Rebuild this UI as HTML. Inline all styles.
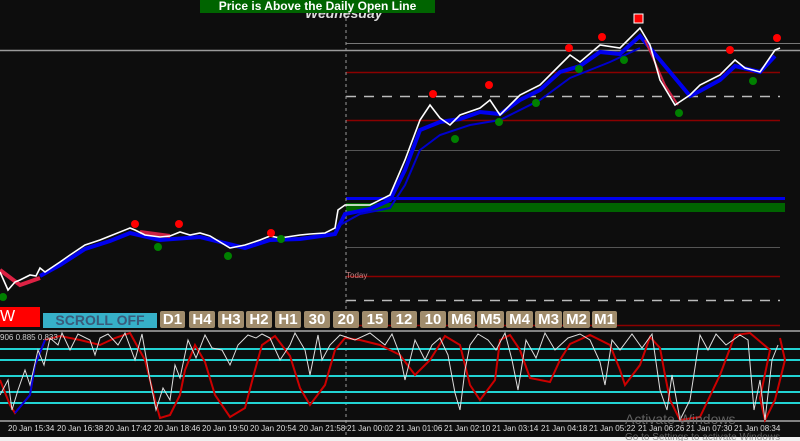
<!DOCTYPE html>
<html><head><meta charset="utf-8"><style>
html,body{margin:0;padding:0;background:#0d0d0d;width:800px;height:441px;overflow:hidden;font-family:"Liberation Sans",sans-serif}
.b{position:absolute;top:311px;height:17px;background:#a08c6c;color:#fff;font-weight:bold;font-size:15px;line-height:17px;text-align:center;border-radius:2px}
</style></head><body>
<svg width="800" height="441" style="position:absolute;left:0;top:0" xmlns="http://www.w3.org/2000/svg">
<rect width="800" height="441" fill="#0d0d0d"/>
<line x1="0" y1="50.5" x2="800" y2="50.5" stroke="#9a9a9a" stroke-width="1.5"/>
<line x1="346" y1="43.5" x2="800" y2="43.5" stroke="#777" stroke-width="1"/>
<line x1="346" y1="72.5" x2="780" y2="72.5" stroke="#8b0000" stroke-width="1.5"/>
<line x1="346" y1="96.5" x2="780" y2="96.5" stroke="#bbb" stroke-width="1.5" stroke-dasharray="10,8"/>
<line x1="346" y1="120.5" x2="780" y2="120.5" stroke="#8b0000" stroke-width="1.5"/>
<line x1="346" y1="150.5" x2="780" y2="150.5" stroke="#555" stroke-width="1"/>
<line x1="346" y1="198.5" x2="785" y2="198.5" stroke="#0000ee" stroke-width="3"/>
<rect x="346" y="203" width="439" height="9" fill="#006400"/>
<line x1="346" y1="247.5" x2="780" y2="247.5" stroke="#555" stroke-width="1"/>
<line x1="346" y1="276.5" x2="780" y2="276.5" stroke="#8b0000" stroke-width="1.5"/>
<line x1="346" y1="300.5" x2="780" y2="300.5" stroke="#bbb" stroke-width="1.5" stroke-dasharray="10,8"/>
<line x1="346" y1="325.5" x2="780" y2="325.5" stroke="#8b0000" stroke-width="1.5"/>
<line x1="346" y1="0" x2="346" y2="436" stroke="#999" stroke-width="1" stroke-dasharray="3,3"/>
<text x="346" y="278" fill="#c08080" font-size="8">Today</text>
<polyline fill="none" stroke="#0000ee" stroke-width="4" points="40,276 60,265 85,249 110,241 130,233 160,240 200,237 245,248 270,240 300,239 335,234 345,214 370,209 390,200 405,170 420,130 440,122 460,119 480,112 500,114 520,100 540,90 560,72 580,66 600,52 620,54 640,36 650,48 690,96 700,91 720,80 735,66 760,72 775,56"/>
<polyline fill="none" stroke="#0000cc" stroke-width="2" points="340,225 360,214 390,208 405,185 420,150 440,135 470,125 500,120 540,100 570,78 610,62 640,48 M690,100 720,88 760,76"/>
<polyline fill="none" stroke="#dd2244" stroke-width="4" points="0,270 20,285 40,278"/>
<polyline fill="none" stroke="#cc2244" stroke-width="4" points="140,232 170,236 M210,236 230,246 245,244 M640,35 660,70 680,95 700,92"/>
<polyline fill="none" stroke="#cc2244" stroke-width="2" points="645,40 665,85 678,105 M650,45 670,80 690,98"/>
<polyline fill="none" stroke="#fff" stroke-width="1.6" points="0,272 8,290 15,282 20,280 30,275 36,276 40,268 45,272 60,262 70,255 85,245 100,240 110,236 130,228 135,230 145,235 160,237 170,236 180,232 190,235 200,233 210,236 220,242 230,248 245,245 260,240 270,236 280,238 300,235 310,234 325,233 335,228 338,210 345,205 370,205 390,195 405,160 420,120 430,105 440,118 450,125 460,115 480,108 490,100 500,115 510,105 520,95 540,85 560,65 570,55 580,62 600,45 620,48 640,28 650,45 660,80 675,105 690,95 700,85 720,75 735,60 745,68 760,72 775,50 780,48"/>
<g fill="#ff0000"><circle cx="135" cy="224" r="4"/><circle cx="179" cy="224" r="4"/><circle cx="271" cy="233" r="4"/><circle cx="433" cy="94" r="4"/><circle cx="489" cy="85" r="4"/><circle cx="569" cy="48" r="4"/><circle cx="602" cy="37" r="4"/><circle cx="730" cy="50" r="4"/><circle cx="777" cy="38" r="4"/></g>
<rect x="634" y="14" width="9" height="9" fill="#f00" stroke="#fff"/>
<g fill="#008000"><circle cx="3" cy="297" r="4"/><circle cx="158" cy="247" r="4"/><circle cx="228" cy="256" r="4"/><circle cx="281" cy="239" r="4"/><circle cx="455" cy="139" r="4"/><circle cx="499" cy="122" r="4"/><circle cx="536" cy="103" r="4"/><circle cx="579" cy="69" r="4"/><circle cx="624" cy="60" r="4"/><circle cx="679" cy="113" r="4"/><circle cx="753" cy="81" r="4"/></g>
<line x1="0" y1="331" x2="800" y2="331" stroke="#aaa" stroke-width="1.5"/>
<line x1="0" y1="421" x2="800" y2="421" stroke="#aaa" stroke-width="1.5"/>
<g stroke="#22d3d3" stroke-width="2"><line x1="0" y1="349" x2="800" y2="349"/><line x1="0" y1="360" x2="800" y2="360"/><line x1="0" y1="376" x2="800" y2="376"/><line x1="0" y1="392" x2="800" y2="392"/><line x1="0" y1="403" x2="800" y2="403"/></g>
<polyline fill="none" stroke="#cc0000" stroke-width="2" points="0,380 10,405 15,413 30,395 35,365 45,340 60,336 80,340 100,345 115,338 130,333 145,360 155,400 160,418 170,415 180,395 185,370 195,345 205,362 215,395 230,417 245,408 255,370 262,345 275,336 290,356 300,388 310,405 325,385 335,350 345,338 360,340 380,345 400,355 415,375 430,360 445,336 460,345 470,385 480,400 495,380 500,340 510,335 520,350 530,378 550,382 560,360 570,344 590,335 610,345 620,370 625,385 640,365 650,337 660,348 665,375 670,400 680,420 700,417 720,375 735,335 750,333 770,350 760,398 765,420 775,400 785,360 780,338"/>
<polyline fill="none" stroke="#0000dd" stroke-width="2" points="15,413 30,395 35,365 45,340 M160,418 170,415 180,395 185,370 195,345 M230,417 245,408 255,370 262,345 M325,385 335,350 M480,400 495,380 500,340 M550,382 560,360 570,344 M640,365 650,337 M700,417 720,375 735,335 M765,420 775,400 785,360"/>
<polyline fill="none" stroke="#ddd" stroke-width="1" points="0,395 8,380 12,410 18,390 25,370 30,385 38,350 44,365 50,338 58,345 62,333 70,350 78,334 90,340 95,355 100,338 108,334 118,345 125,333 135,360 142,334 150,380 156,410 163,388 170,400 175,365 180,378 188,340 196,358 205,335 212,348 222,350 230,365 238,345 248,335 256,338 262,334 270,338 280,360 290,345 295,333 305,350 310,375 318,335 322,360 330,345 340,335 355,340 370,333 385,345 392,334 400,355 405,380 415,340 425,360 432,345 440,338 448,355 455,393 460,410 465,370 470,345 478,334 488,340 496,350 505,333 512,360 518,390 526,340 536,358 545,333 555,350 568,338 580,334 590,340 600,362 605,385 612,340 620,350 632,334 642,348 652,334 660,390 667,410 672,375 680,420 690,400 700,335 708,350 716,334 726,345 740,335 748,340 754,410 760,380 765,420 772,360 778,345"/>
<text x="0" y="340" fill="#ccc" font-size="8">906 0.885 0.833</text>
<g fill="#ddd" font-size="8">
<text x="8" y="431">20 Jan 15:34</text><text x="57" y="431">20 Jan 16:38</text><text x="105" y="431">20 Jan 17:42</text><text x="154" y="431">20 Jan 18:46</text><text x="202" y="431">20 Jan 19:50</text><text x="250" y="431">20 Jan 20:54</text><text x="299" y="431">20 Jan 21:58</text><text x="347" y="431">21 Jan 00:02</text><text x="396" y="431">21 Jan 01:06</text><text x="444" y="431">21 Jan 02:10</text><text x="492" y="431">21 Jan 03:14</text><text x="541" y="431">21 Jan 04:18</text><text x="589" y="431">21 Jan 05:22</text><text x="638" y="431">21 Jan 06:26</text><text x="686" y="431">21 Jan 07:30</text><text x="734" y="431">21 Jan 08:34</text>
</g>
<rect x="0" y="437" width="800" height="4" fill="#f0f0f0"/>
<text x="625" y="424" fill="#777" font-size="14" opacity="0.8">Activate Windows</text>
<text x="625" y="440" fill="#777" font-size="10" opacity="0.8">Go to Settings to activate Windows</text>
</svg>
<div style="position:absolute;left:305px;top:5px;color:#ddd;font-weight:bold;font-style:italic;font-size:14px">Wednesday</div>
<div style="position:absolute;left:200px;top:0;width:235px;height:13px;background:#006400;color:#fff;font-weight:bold;font-size:12px;line-height:13px;text-align:center">Price is Above the Daily Open Line</div>
<div style="position:absolute;left:0;top:307px;width:40px;height:20px;background:#f00;color:#fff;font-size:16px;line-height:20px">W</div>
<div style="position:absolute;left:43px;top:313px;width:114px;height:15px;background:#36b0c8;color:#3a5a7a;font-weight:bold;font-size:14px;line-height:15px;text-align:center">SCROLL OFF</div>
<div class="b" style="left:160px;width:25px">D1</div>
<div class="b" style="left:189px;width:26px">H4</div>
<div class="b" style="left:218px;width:26px">H3</div>
<div class="b" style="left:246px;width:26px">H2</div>
<div class="b" style="left:275px;width:26px">H1</div>
<div class="b" style="left:304px;width:26px">30</div>
<div class="b" style="left:333px;width:26px">20</div>
<div class="b" style="left:362px;width:26px">15</div>
<div class="b" style="left:391px;width:26px">12</div>
<div class="b" style="left:420px;width:26px">10</div>
<div class="b" style="left:448px;width:27px">M6</div>
<div class="b" style="left:477px;width:27px">M5</div>
<div class="b" style="left:506px;width:27px">M4</div>
<div class="b" style="left:535px;width:27px">M3</div>
<div class="b" style="left:563px;width:27px">M2</div>
<div class="b" style="left:592px;width:25px">M1</div>
</body></html>
